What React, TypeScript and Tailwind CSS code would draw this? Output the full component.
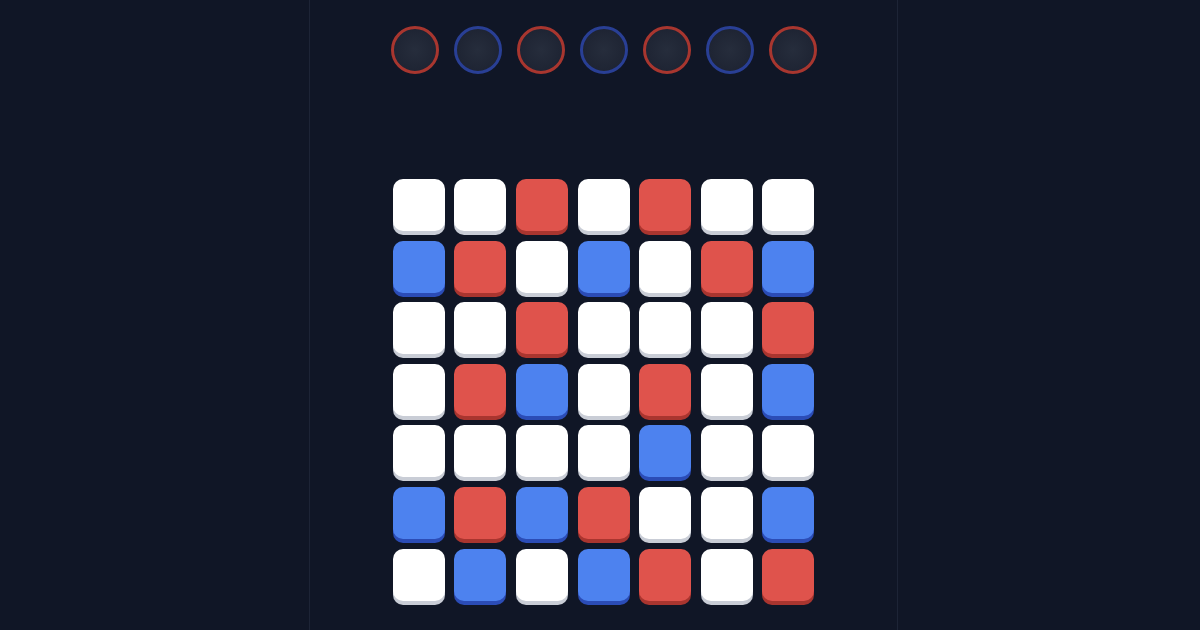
const board = [
  'WWRWRWW',
  'BRWBWRB',
  'WWRWWWR',
  'WRBWRWB',
  'WWWWBWW',
  'BRBRWWB',
  'WBWBRWR',
]

const tileClass: Record<string, string> = {
  W: 'bg-white shadow-[0_4px_0_#c9cdd6]',
  R: 'bg-[#df534c] shadow-[0_4px_0_#a9352f]',
  B: 'bg-[#4d82ef] shadow-[0_4px_0_#2b4cb6]',
}

const slots = ['red', 'blue', 'red', 'blue', 'red', 'blue', 'red']

export default function App() {
  return (
    <div className="w-[1200px] h-[630px] bg-[#101626] flex overflow-hidden">
      <div className="w-[309px] shrink-0" />
      <div className="w-[589px] h-full border-x border-[#1d2436] bg-[#101626] flex flex-col items-center pt-[26px]">
        <div className="flex gap-[15px] pl-[1px]">
          {slots.map((c, i) => (
            <div
              key={i}
              className={
                'w-[48px] h-[48px] rounded-full border-[3px] bg-[radial-gradient(circle,#262d3c_0%,#1f2534_65%,#1a2030_100%)] ' +
                (c === 'red' ? 'border-[#a8362f]' : 'border-[#293f95]')
              }
            />
          ))}
        </div>
        <div className="mt-[105px] flex flex-col gap-[9.6px]">
          {board.map((row, r) => (
            <div key={r} className="flex gap-[9.6px]">
              {row.split('').map((t, c) => (
                <div key={c} className={'w-[52px] h-[52px] rounded-[10px] ' + tileClass[t]} />
              ))}
            </div>
          ))}
        </div>
      </div>
    </div>
  )
}
